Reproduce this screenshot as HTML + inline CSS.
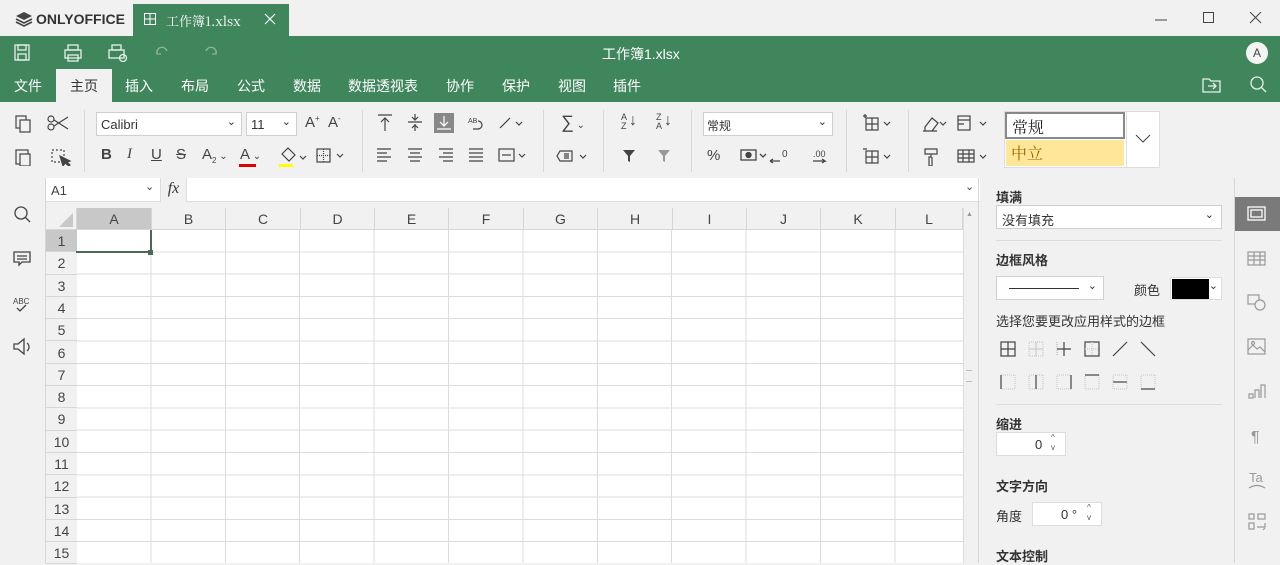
<!DOCTYPE html>
<html><head><meta charset="utf-8"><style>
*{box-sizing:border-box;margin:0;padding:0}
body{width:1280px;height:563px;overflow:hidden;background:#f1f1f1;font-family:"Liberation Sans","Noto Sans CJK SC",sans-serif;font-size:13px;color:#333;position:relative}
.a{position:absolute}
.g{background:#40865c}
.w{color:#fff}
.tab{font-size:14px;color:#fff;top:76px}
.ic{stroke:#444;fill:none;stroke-width:1.2}
.sel{background:#fff;border:1px solid #cfcfcf;height:24px}
.colh{top:208px;height:22px;background:#f1f1f1;border-right:1px solid #d6d6d6;border-bottom:1px solid #d6d6d6;text-align:center;line-height:22px;font-size:14px;color:#444}
.rowh{left:46px;width:31px;height:22.3px;text-align:center;font-size:14px;color:#444;line-height:22px;border-bottom:1px solid #d6d6d6;background:#f1f1f1}
.b{font-weight:bold;font-size:13px;color:#333}
.sep{background:#d8d8d8;width:1px}
.ri{left:1248px;width:20px;height:16px;border:1.3px solid #999;border-radius:1px}
</style></head><body>
<!-- title bar -->
<div class="a" style="left:0;top:0;width:1280px;height:36px;background:#f1f1f1"></div>
<svg class="a" style="left:15px;top:11px" width="18" height="16"><path d="M9 1 L17 5 L9 9 L1 5Z" fill="#444"/><path d="M1 8 L9 12 L17 8 M1 11 L9 15 L17 11" stroke="#444" fill="none" stroke-width="1.6"/></svg>
<div class="a" style="left:36px;top:11px;font-weight:bold;font-size:14px;color:#333">ONLYOFFICE</div>
<div class="a g" style="left:133px;top:4px;width:156px;height:32px"></div>
<svg class="a" style="left:144px;top:13px" width="12" height="12"><rect x=".5" y=".5" width="11" height="11" stroke="#fff" fill="none"/><path d="M0 6H12M6 0V12" stroke="#fff"/></svg>
<div class="a w" style="left:166px;top:11px;font-size:13px;font-family:'Noto Serif CJK SC','Liberation Serif',serif">工作簿1.xlsx</div>
<svg class="a" style="left:264px;top:13px" width="12" height="12"><path d="M1 1L11 11M11 1L1 11" stroke="#fff" stroke-width="1.2"/></svg>
<svg class="a" style="left:1155px;top:12px" width="110" height="12"><path d="M0 8H12" stroke="#444"/><rect x="48.5" y=".5" width="10" height="10" stroke="#444" fill="none"/><path d="M95 0L106 11M106 0L95 11" stroke="#444"/></svg>
<!-- green header -->
<div class="a g" style="left:0;top:36px;width:1280px;height:66px"></div>
<svg class="a" style="left:14px;top:44px" width="210" height="18" stroke="#e8f0ea" fill="none" stroke-width="1.3"><rect x="1" y="1" width="14" height="15"/><rect x="4" y="1" width="8" height="5"/><rect x="4" y="10" width="8" height="6"/>
<rect x="51" y="6" width="16" height="8"/><rect x="54" y="1" width="10" height="5"/><rect x="54" y="11" width="10" height="6"/>
<rect x="95" y="6" width="15" height="8"/><rect x="98" y="1" width="9" height="5"/><circle cx="109" cy="14" r="3.5"/>
<path d="M143 10 a5 5 0 0 1 10 -3 M143 6 v4 h4" stroke="#8fb39c"/><path d="M202 10 a5 5 0 0 0 -10 -3 M202 6 v4 h-4" stroke="#8fb39c"/></svg>
<div class="a w" style="left:602px;top:44px;font-size:14px">工作簿1.xlsx</div>
<div class="a" style="left:1246px;top:42px;width:22px;height:22px;border-radius:50%;background:#f4f4f4;color:#444;text-align:center;line-height:22px;font-size:12px">A</div>
<div class="a" style="left:56px;top:69px;width:56px;height:33px;background:#f1f1f1"></div>
<div class="a tab" style="left:14px">文件</div>
<div class="a tab" style="left:70px;color:#333">主页</div>
<div class="a tab" style="left:125px">插入</div>
<div class="a tab" style="left:181px">布局</div>
<div class="a tab" style="left:237px">公式</div>
<div class="a tab" style="left:293px">数据</div>
<div class="a tab" style="left:348px">数据透视表</div>
<div class="a tab" style="left:446px">协作</div>
<div class="a tab" style="left:502px">保护</div>
<div class="a tab" style="left:558px">视图</div>
<div class="a tab" style="left:613px">插件</div>
<svg class="a" style="left:1202px;top:76px" width="70" height="18" stroke="#e8f0ea" fill="none" stroke-width="1.3"><path d="M1 3h6l2 2h9v11H1z M6 10h8 M11 7l3 3-3 3"/><circle cx="55" cy="7" r="6"/><path d="M59 11l5 5"/></svg>
<!-- toolbar -->
<svg class="a" style="left:14px;top:114px" width="60" height="52" class="ic" stroke="#444" fill="none" stroke-width="1.2">
<rect x="2" y="2" width="10" height="12"/><rect x="6" y="6" width="10" height="12" fill="#f1f1f1"/>
<circle cx="37" cy="13" r="3"/><circle cx="37" cy="5" r="3"/><path d="M40 12L54 3M40 6L54 15"/>
<rect x="2" y="36" width="12" height="14"/><rect x="6" y="40" width="10" height="12" fill="#f1f1f1"/>
<rect x="38" y="36" width="12" height="12" stroke-dasharray="2 2"/><path d="M46 42l3 10 2-3 4 3 1-1-3-3 3-1z" fill="#444"/></svg>
<div class="sep a" style="left:84px;top:110px;height:62px"></div>
<div class="a sel" style="left:96px;top:112px;width:146px"><span class="a" style="left:4px;top:4px">Calibri</span><span class="a" style="right:5px;top:2px;font-size:11px">⌄</span></div>
<div class="a sel" style="left:246px;top:112px;width:51px"><span class="a" style="left:4px;top:4px">11</span><span class="a" style="right:5px;top:2px;font-size:11px">⌄</span></div>
<div class="a" style="left:305px;top:114px;font-size:15px;color:#444">A<sup style="font-size:8px">+</sup> &nbsp;A<sup style="font-size:8px">-</sup></div>
<div class="a" style="left:101px;top:146px;font-size:15px;color:#444;word-spacing:0"><b>B</b></div>
<div class="a" style="left:127px;top:146px;font-size:15px;color:#444;font-style:italic;font-family:'Liberation Serif',serif">I</div>
<div class="a" style="left:151px;top:146px;font-size:15px;color:#444;text-decoration:underline">U</div>
<div class="a" style="left:176px;top:146px;font-size:15px;color:#444;text-decoration:line-through">S</div>
<div class="a" style="left:202px;top:146px;font-size:15px;color:#444">A<sub style="font-size:8px">2</sub><span style="font-size:10px"> ⌄</span></div>
<div class="a" style="left:240px;top:146px;font-size:15px;color:#444">A<span style="font-size:10px"> ⌄</span></div>
<div class="a" style="left:239px;top:164px;width:17px;height:3px;background:#d00"></div>
<svg class="a" style="left:278px;top:146px" width="80" height="22" stroke="#444" fill="none" stroke-width="1.2"><path d="M4 8l6-6 7 7-6 6z"/><rect x="1" y="18" width="14" height="3" fill="#ff0" stroke="none"/><path d="M22 10l3 3 3-3"/><rect x="39" y="3" width="13" height="13"/><path d="M45.5 3v13M39 9.5h13" stroke-dasharray="1 1"/><path d="M59 8l3 3 3-3"/></svg>
<div class="sep a" style="left:362px;top:110px;height:62px"></div>
<svg class="a" style="left:376px;top:113px" width="150" height="20" stroke="#444" fill="none" stroke-width="1.2"><path d="M2 2h14M9 5v13M5 9l4-4 4 4"/><path d="M32 9h14M39 1v6M39 11v7M36 4l3 3 3-3M36 15l3-3 3 3"/><rect x="58" y="0" width="20" height="20" fill="#888" stroke="none"/><path d="M61 16h14M68 3v10M64 9l4 4 4-4" stroke="#fff"/><text x="92" y="10" font-size="7" fill="#444" stroke="none">AB</text><path d="M102 8a4 4 0 0 1 0 8h-5"/><path d="M124 15l10-10M140 9l3 3 3-3"/></svg>
<svg class="a" style="left:376px;top:146px" width="150" height="20" stroke="#444" fill="none" stroke-width="1.2"><path d="M1 3h14M1 7h10M1 11h14M1 15h10"/><path d="M32 3h14M34 7h10M32 11h14M34 15h10"/><path d="M63 3h14M67 7h10M63 11h14M67 15h10"/><path d="M93 3h14M93 7h14M93 11h14M93 15h14"/><rect x="123" y="3" width="15" height="12"/><path d="M126 9h9"/><path d="M143 8l3 3 3-3"/></svg>
<div class="sep a" style="left:543px;top:110px;height:62px"></div>
<div class="a" style="left:561px;top:112px;font-size:18px;color:#444">∑<span style="font-size:10px"> ⌄</span></div>
<svg class="a" style="left:556px;top:146px" width="36" height="20" stroke="#444" fill="none" stroke-width="1.2"><path d="M4 5h12v10H4l-3-5z M8 8h5M8 10h5M8 12h5"/><path d="M24 9l3 3 3-3"/></svg>
<div class="sep a" style="left:603px;top:110px;height:62px"></div>
<div class="a" style="left:621px;top:113px;font-size:9px;line-height:9px;color:#444">A<br>Z</div><div class="a" style="left:629px;top:112px;font-size:16px;color:#444">↓</div>
<div class="a" style="left:656px;top:113px;font-size:9px;line-height:9px;color:#444">Z<br>A</div><div class="a" style="left:664px;top:112px;font-size:16px;color:#444">↓</div>
<svg class="a" style="left:622px;top:148px" width="60" height="16"><path d="M1 2h12l-5 6v6l-2-1V8z" fill="#444"/><path d="M36 2h12l-5 6v6l-2-1V8z" fill="#999"/></svg>
<div class="sep a" style="left:691px;top:110px;height:62px"></div>
<div class="a sel" style="left:703px;top:112px;width:130px"><span class="a" style="left:3px;top:4px;font-size:12px">常规</span><span class="a" style="right:5px;top:2px;font-size:11px">⌄</span></div>
<div class="a" style="left:707px;top:147px;font-size:15px;color:#444">%</div>
<svg class="a" style="left:740px;top:146px" width="95" height="20" stroke="#444" fill="none" stroke-width="1.3"><rect x="1" y="4" width="15" height="10"/><circle cx="8.5" cy="9" r="2.5" fill="#444"/><path d="M20 8l3 3 3-3"/><path d="M30 15h10M30 15l3-2M30 15l3 2"/><text x="42" y="11" font-size="10" fill="#444" stroke="none">0</text><text x="73" y="11" font-size="9" fill="#444" stroke="none">.00</text><path d="M73 15h12l-3-2M85 15l-3 2"/></svg>
<div class="sep a" style="left:846px;top:110px;height:62px"></div>
<svg class="a" style="left:862px;top:114px" width="30" height="52" stroke="#444" fill="none" stroke-width="1.2"><rect x="4" y="4" width="12" height="12"/><path d="M10 4v12M4 10h12M1 2h4M3 0v4"/><path d="M22 8l3 3 3-3"/><rect x="4" y="37" width="12" height="12"/><path d="M10 37v12M4 43h12M1 35h4"/><path d="M22 41l3 3 3-3"/></svg>
<div class="sep a" style="left:908px;top:110px;height:62px"></div>
<svg class="a" style="left:922px;top:114px" width="72" height="52" stroke="#444" fill="none" stroke-width="1.2"><path d="M3 13l7-9 6 5-6 8H3z M1 17h14"/><path d="M18 8l3 3 3-3"/><rect x="36" y="2" width="12" height="14"/><path d="M36 6h12M36 10h6"/><path d="M58 8l3 3 3-3"/><path d="M3 35h12v5H3z M9 40v3h-2v9h3v-9"/><rect x="36" y="36" width="16" height="12"/><path d="M36 40h16M36 44h16M41 36v12M47 36v12"/><path d="M58 41l3 3 3-3"/></svg>
<div class="a" style="left:1004px;top:111px;width:156px;height:57px;background:#fff;border:1px solid #ddd"></div>
<div class="a" style="left:1005px;top:112px;width:120px;height:27px;border:2px solid #888;background:#fff;font-size:16px;color:#222;padding:1px 5px;font-family:'Noto Serif CJK SC',serif">常规</div>
<div class="a" style="left:1006px;top:140px;width:118px;height:26px;background:#ffe699;font-size:16px;color:#9c6500;padding:1px 5px;font-family:'Noto Serif CJK SC',serif">中立</div>
<div class="a" style="left:1126px;top:112px;width:1px;height:55px;background:#ddd"></div>
<svg class="a" style="left:1135px;top:134px" width="16" height="10"><path d="M1 1l7 7 7-7" stroke="#444" fill="none"/></svg>
<!-- left sidebar -->
<div class="a" style="left:45px;top:178px;width:1px;height:385px;background:#d6d6d6"></div>
<svg class="a" style="left:12px;top:204px" width="24" height="160" stroke="#444" fill="none" stroke-width="1.3"><circle cx="9" cy="9" r="6"/><path d="M13 13l5 5"/><path d="M2 48h16v10h-8l-3 3v-3H2z M5 52h10M5 55h10"/><text x="1" y="100" font-size="8" fill="#444" stroke="none">ABC</text><path d="M5 104l3 3 6-6"/><path d="M2 140h4l6-5v15l-6-5H2z M15 139a5 5 0 0 1 0 8"/></svg>
<!-- formula bar -->
<div class="a" style="left:46px;top:178px;width:934px;height:24px;background:#fff;border-bottom:1px solid #ddd"></div>
<div class="a" style="left:51px;top:183px;font-size:13px;color:#444">A1</div>
<div class="a" style="left:145px;top:180px;font-size:11px;color:#444">⌄</div>
<div class="a" style="left:160px;top:178px;width:27px;height:24px;background:#f1f1f1;border-left:1px solid #ddd;border-right:1px solid #ddd;font-family:'Liberation Serif',serif;font-style:italic;font-size:16px;text-align:center;line-height:22px">fx</div>
<div class="a" style="left:965px;top:180px;font-size:11px;color:#444">⌄</div>
<div class="a" style="left:46px;top:202px;width:932px;height:6px;background:#f1f1f1"></div>
<!-- grid -->
<div class="a" style="left:77px;top:230px;width:886px;height:333px;background:#fff;background-image:repeating-linear-gradient(to right,transparent 0,transparent 73.4px,#dcdcdc 73.4px,#dcdcdc 74.4px),repeating-linear-gradient(to bottom,transparent 0,transparent 21.3px,#dcdcdc 21.3px,#dcdcdc 22.3px)"></div>
<div class="a" style="left:46px;top:208px;width:31px;height:22px;background:#f1f1f1;border-right:1px solid #d6d6d6;border-bottom:1px solid #d6d6d6"></div>
<svg class="a" style="left:58px;top:212px" width="16" height="16"><path d="M15 1V15H1z" fill="#c8c8c8"/></svg>
<div class="a colh" style="left:77px;width:75px;background:#c8c8c8">A</div>
<div class="a colh" style="left:152px;width:74px">B</div>
<div class="a colh" style="left:226px;width:75px">C</div>
<div class="a colh" style="left:301px;width:74px">D</div>
<div class="a colh" style="left:375px;width:74px">E</div>
<div class="a colh" style="left:449px;width:75px">F</div>
<div class="a colh" style="left:524px;width:74px">G</div>
<div class="a colh" style="left:598px;width:75px">H</div>
<div class="a colh" style="left:673px;width:74px">I</div>
<div class="a colh" style="left:747px;width:74px">J</div>
<div class="a colh" style="left:821px;width:75px">K</div>
<div class="a colh" style="left:896px;width:67px">L</div>
<div class="a" style="left:46px;top:230px;width:31px;height:333px;border-right:1px solid #d6d6d6">
<div class="rowh a" style="left:0;top:0;background:#c8c8c8">1</div>
<div class="rowh a" style="left:0;top:22.3px">2</div>
<div class="rowh a" style="left:0;top:44.6px">3</div>
<div class="rowh a" style="left:0;top:66.9px">4</div>
<div class="rowh a" style="left:0;top:89.2px">5</div>
<div class="rowh a" style="left:0;top:111.5px">6</div>
<div class="rowh a" style="left:0;top:133.8px">7</div>
<div class="rowh a" style="left:0;top:156.1px">8</div>
<div class="rowh a" style="left:0;top:178.4px">9</div>
<div class="rowh a" style="left:0;top:200.7px">10</div>
<div class="rowh a" style="left:0;top:223px">11</div>
<div class="rowh a" style="left:0;top:245.3px">12</div>
<div class="rowh a" style="left:0;top:267.6px">13</div>
<div class="rowh a" style="left:0;top:289.9px">14</div>
<div class="rowh a" style="left:0;top:312.2px">15</div>
</div>
<div class="a" style="left:76px;top:230px;width:76px;height:23px;border:2px solid #4a6a55;border-top:none;border-left:none"></div>
<div class="a" style="left:148px;top:250px;width:5px;height:5px;background:#4a6a55"></div>
<!-- scrollbar -->
<div class="a" style="left:963px;top:208px;width:15px;height:355px;background:#f1f1f1;border-left:1px solid #ddd"></div>
<div class="a" style="left:966px;top:211px;font-size:7px;color:#999">▲</div>
<div class="a" style="left:966px;top:370px;width:6px;height:12px;border-top:1px solid #bbb;border-bottom:1px solid #bbb"></div>
<!-- right panel -->
<div class="a" style="left:978px;top:178px;width:1px;height:385px;background:#d6d6d6"></div>
<div class="a b" style="left:996px;top:187px">填满</div>
<div class="a sel" style="left:996px;top:205px;width:226px"><span class="a" style="left:5px;top:4px">没有填充</span><span class="a" style="right:7px;top:2px;font-size:11px">⌄</span></div>
<div class="a" style="left:996px;top:240px;width:226px;height:1px;background:#ddd"></div>
<div class="a b" style="left:996px;top:250px">边框风格</div>
<div class="a sel" style="left:996px;top:276px;width:108px"><div class="a" style="left:12px;top:11px;width:70px;height:1px;background:#333"></div><span class="a" style="right:6px;top:2px;font-size:11px">⌄</span></div>
<div class="a" style="left:1134px;top:280px">颜色</div>
<div class="a" style="left:1170px;top:277px;width:52px;height:23px;background:#fff;border:1px solid #ddd"><div class="a" style="left:1px;top:1px;width:37px;height:20px;background:#000"></div><span class="a" style="right:3px;top:1px;font-size:11px">⌄</span></div>
<div class="a" style="left:996px;top:311px">选择您要更改应用样式的边框</div>
<svg class="a" style="left:1000px;top:341px" width="160" height="50" stroke="#444" fill="none" stroke-width="1.2">
<rect x="1" y="1" width="14" height="14"/><path d="M8 1v14M1 8h14"/>
<rect x="29" y="1" width="14" height="14" stroke="#ccc" stroke-dasharray="1 1"/><path d="M36 1v14M29 8h14" stroke="#ccc"/>
<path d="M57 1v14" stroke-dasharray="1 1" stroke="#bbb"/><path d="M64 1v14M57 8h14"/>
<rect x="85" y="1" width="14" height="14"/><path d="M92 1v14M85 8h14" stroke="#ccc" stroke-dasharray="1 1"/>
<path d="M113 15L127 1"/><path d="M141 1L155 15"/>
<rect x="1" y="34" width="14" height="14" stroke="#ccc" stroke-dasharray="1 1"/><path d="M1 34v14"/>
<rect x="29" y="34" width="14" height="14" stroke="#ccc" stroke-dasharray="1 1"/><path d="M36 34v14"/>
<rect x="57" y="34" width="14" height="14" stroke="#ccc" stroke-dasharray="1 1"/><path d="M71 34v14"/>
<rect x="85" y="34" width="14" height="14" stroke="#ccc" stroke-dasharray="1 1"/><path d="M85 34h14"/>
<path d="M113 41h14"/><rect x="113" y="34" width="14" height="14" stroke="#ccc" stroke-dasharray="1 1"/>
<rect x="141" y="34" width="14" height="14" stroke="#ccc" stroke-dasharray="1 1"/><path d="M141 48h14"/></svg>
<div class="a" style="left:996px;top:404px;width:226px;height:1px;background:#ddd"></div>
<div class="a b" style="left:996px;top:414px">缩进</div>
<div class="a" style="left:996px;top:432px;width:70px;height:24px;background:#fff;border:1px solid #ddd"><span class="a" style="left:38px;top:4px">0</span><span class="a" style="left:54px;top:0;font-size:8px;line-height:10px;color:#555">^<br>v</span></div>
<div class="a b" style="left:996px;top:476px">文字方向</div>
<div class="a" style="left:996px;top:506px">角度</div>
<div class="a" style="left:1032px;top:502px;width:70px;height:24px;background:#fff;border:1px solid #ddd"><span class="a" style="left:28px;top:4px">0 °</span><span class="a" style="left:54px;top:0;font-size:8px;line-height:10px;color:#555">^<br>v</span></div>
<div class="a b" style="left:996px;top:546px">文本控制</div>
<!-- right icon bar -->
<div class="a" style="left:1234px;top:178px;width:1px;height:385px;background:#d6d6d6"></div>
<div class="a" style="left:1235px;top:197px;width:45px;height:34px;background:#7a7a7a"></div>
<svg class="a" style="left:1247px;top:206px" width="20" height="16" stroke="#fff" fill="none" stroke-width="1.3"><rect x="1" y="1" width="17" height="13"/><rect x="4" y="4" width="11" height="7"/></svg>
<svg class="a" style="left:1247px;top:250px" width="22" height="300" stroke="#999" fill="none" stroke-width="1.2">
<rect x="1" y="2" width="17" height="13"/><path d="M1 6h17M1 10h17M7 2v13M13 2v13"/>
<rect x="1" y="45" width="11" height="9"/><circle cx="13" cy="55" r="5" fill="#f1f1f1"/>
<rect x="1" y="89" width="17" height="15"/><path d="M1 100l5-5 4 4 3-2 5 5"/><circle cx="6" cy="93" r="1.5"/>
<path d="M2 148h4v-4H2z M8 148v-8h4v8 M14 148v-13h4v13" />
<text x="4" y="192" font-size="16" fill="#999" stroke="none">¶</text>
<text x="2" y="232" font-size="13" fill="#999" stroke="none">Ta</text><path d="M2 238q8-5 16 0"/>
<rect x="2" y="264" width="5" height="5"/><rect x="11" y="264" width="7" height="5"/><rect x="2" y="273" width="5" height="6"/><path d="M10 277h8v-4M16 280l2-2"/>
</svg>
</body></html>
